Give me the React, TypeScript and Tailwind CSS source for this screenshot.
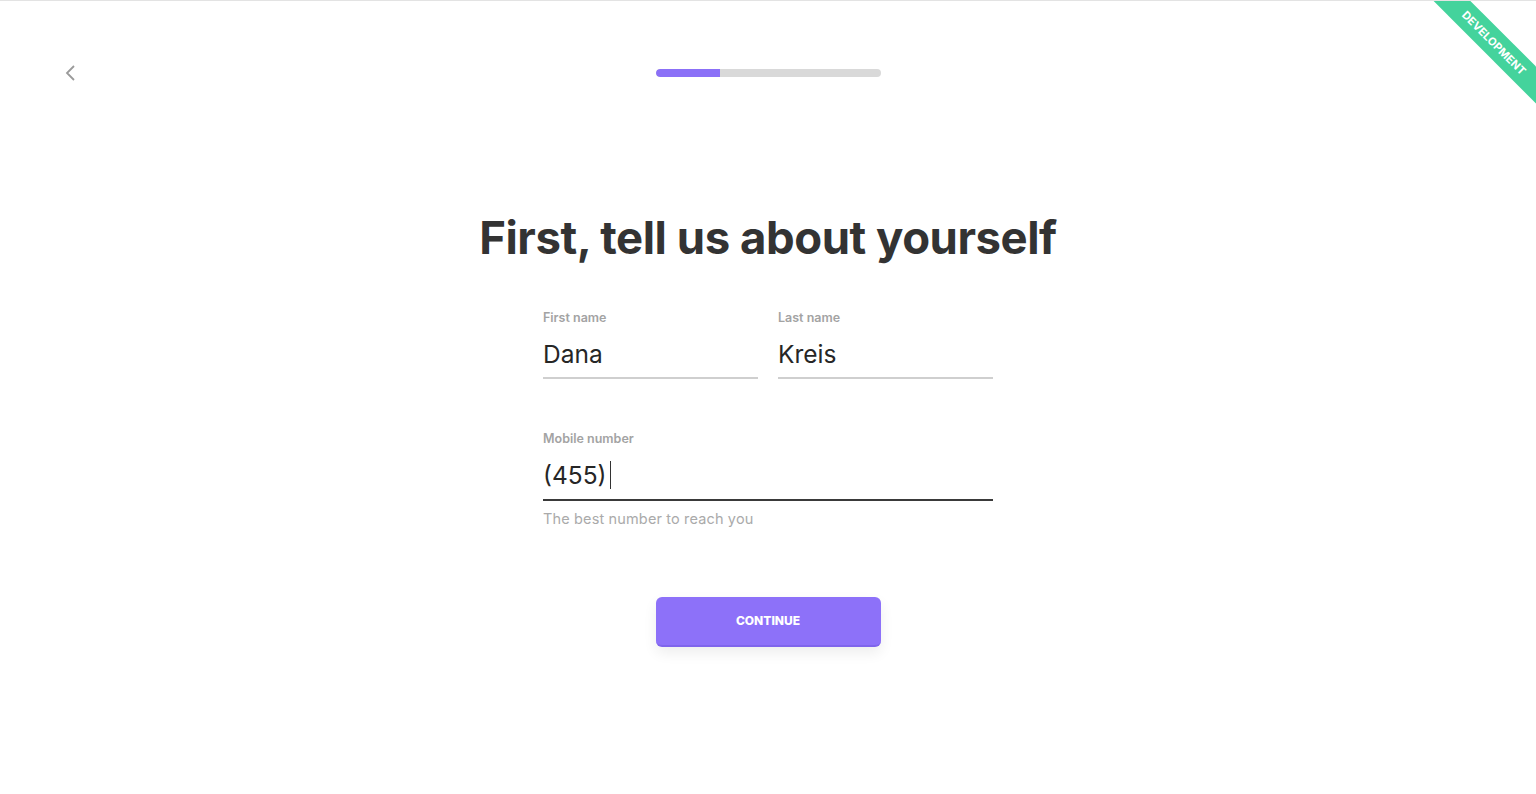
import React, { useState } from "react";

const font = "font-['Inter','Noto_Sans',sans-serif]";

function Ribbon() {
  return (
    <div className="pointer-events-none absolute top-0 right-0 w-[103px] h-[103px] overflow-hidden">
      <div className="absolute left-[-19px] top-[29px] w-[160px] h-[26px] rotate-45 bg-[#44d39c] flex items-center justify-center">
        <span className="text-white text-[11px] font-bold tracking-[0.01em] uppercase">Development</span>
      </div>
    </div>
  );
}

function Field({ label, value, className = "" }: { label: string; value: string; className?: string }) {
  return (
    <label className={`flex flex-col ${className}`}>
      <span className="text-[12.5px] font-semibold text-[#a3a3a3] leading-4">{label}</span>
      <span className="mt-[12px] pb-[7px] text-[24.5px] leading-8 text-[#262626] border-b-2 border-[#cfcfcf]">{value}</span>
    </label>
  );
}

export default function App() {
  const [step] = useState(1);
  const progress = (step / 3.5) * 100;

  return (
    <div className={`relative min-h-screen bg-white border-t border-[#e3e3e3] ${font}`}>
      <Ribbon />

      {/* Top bar: back + progress */}
      <header className="grid grid-cols-[1fr_auto_1fr] items-center px-[64px] pt-[60px]">
        <button className="w-6 h-6 flex items-center justify-start text-[#9a9a9a]">
          <svg width="14" height="18" viewBox="0 0 14 18" fill="none" stroke="currentColor" strokeWidth="1.8">
            <path d="M10 2 L3 9 L10 16" />
          </svg>
        </button>
        <div className="w-[225px] h-2 rounded-full bg-[#d9d9d9] overflow-hidden">
          <div className="h-full bg-[#8b70f7] rounded-l-full" style={{ width: `${progress}%` }} />
        </div>
        <div />
      </header>

      <main className="flex flex-col items-center">
        <h1 className="mt-[125px] text-[45.5px] leading-[56px] font-bold text-[#333333] tracking-[-0.01em]">
          First, tell us about yourself
        </h1>

        <form className="mt-[44px] w-[450px] flex flex-col">
          <div className="grid grid-cols-2 gap-5">
            <Field label="First name" value="Dana" />
            <Field label="Last name" value="Kreis" />
          </div>

          <label className="mt-[52px] flex flex-col">
            <span className="text-[12.5px] font-semibold text-[#a3a3a3] leading-4">Mobile number</span>
            <span className="mt-[12px] pb-[8px] text-[24.5px] leading-8 text-[#262626] border-b-2 border-[#3a3a3a] flex items-center">
              (455)
              <span className="ml-[3px] w-px h-[28px] bg-[#333]" />
            </span>
            <span className="mt-[7px] text-[14.5px] tracking-[0.01em] text-[#aaaaaa]">The best number to reach you</span>
          </label>

          <button
            type="button"
            className="mt-[67px] self-center w-[225px] h-[50px] rounded-md bg-[#8d71f9] text-white text-[12px] font-extrabold uppercase shadow-[0_6px_14px_rgba(0,0,0,0.07)] border-b-2 border-[#7f64ec]"
          >
            Continue
          </button>
        </form>
      </main>
    </div>
  );
}
